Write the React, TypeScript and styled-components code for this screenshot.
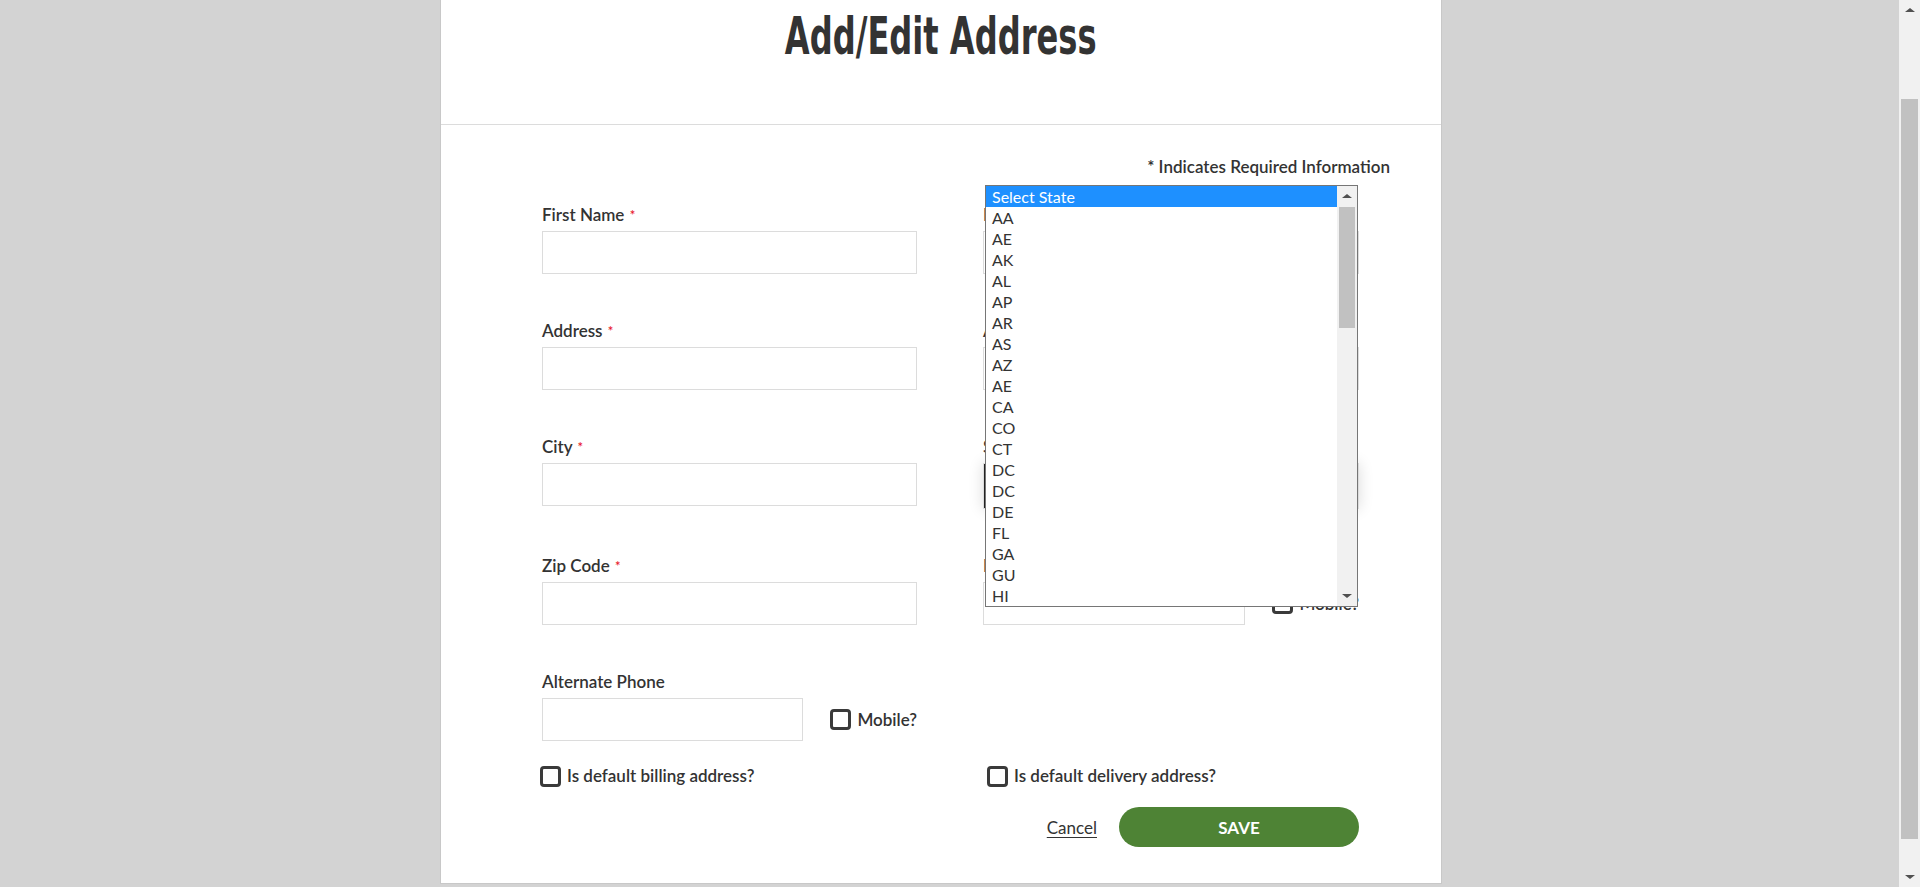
import React from "react";
import styled, { createGlobalStyle } from "styled-components";

const STATES = [
  "AA", "AE", "AK", "AL", "AP", "AR", "AS", "AZ", "AE", "CA", "CO", "CT", "DC", "DC",
  "DE", "FL", "GA", "GU", "HI", "IA", "ID", "IL", "IN", "KS", "KY", "LA", "MA", "MD",
  "ME", "MH", "MI", "MN", "MO", "MP", "MS", "MT", "NC", "ND", "NE", "NH", "NJ", "NM",
  "NV", "NY", "OH", "OK", "OR", "PA", "PR", "PW", "RI", "SC", "SD", "TN", "TX", "UT",
  "VA", "VI", "VT", "WA", "WI", "WV",
];

const GlobalStyle = createGlobalStyle`
  html, body {
    margin: 0;
    padding: 0;
    overflow: hidden;
    font-family: Lato, "Open Sans", sans-serif;
    color: #333;
  }
  * {
    box-sizing: border-box;
  }
`;

// classic scrollbar: arrow, track with thumb, arrow
const ScrollBar = ({
  width,
  thumbTop,
  thumbHeight,
}: {
  width: number;
  thumbTop: number;
  thumbHeight: number;
}) => (
  <Bar $w={width}>
    <ArrowBtn>
      <Tri $dir="up" />
    </ArrowBtn>
    <Track>
      <Thumb style={{ marginTop: thumbTop, height: thumbHeight }} />
    </Track>
    <ArrowBtn>
      <Tri $dir="down" />
    </ArrowBtn>
  </Bar>
);

const App = () => {
  return (
    <>
      <GlobalStyle />
      <Screen>
        <Main>
          <Modal>
            <Header>
              <Title>Add/Edit Address</Title>
            </Header>
            <Body>
              <RequiredNote>* Indicates Required Information</RequiredNote>
              <FormGrid>
                <Field>
                  <Label>
                    First Name <Req>*</Req>
                  </Label>
                  <TextInput />
                </Field>
                <Field>
                  <Label>
                    Last Name <Req>*</Req>
                  </Label>
                  <TextInput />
                </Field>

                <Field>
                  <Label>
                    Address <Req>*</Req>
                  </Label>
                  <TextInput />
                </Field>
                <Field>
                  <Label>Apartment/Suite</Label>
                  <TextInput />
                </Field>

                <Field>
                  <Label>
                    City <Req>*</Req>
                  </Label>
                  <TextInput />
                </Field>
                <Field>
                  <Label>
                    State <Req>*</Req>
                  </Label>
                  <StateSelect>
                    <option>Select State</option>
                  </StateSelect>
                </Field>

                <Field>
                  <Label>
                    Zip Code <Req>*</Req>
                  </Label>
                  <TextInput />
                </Field>
                <Field>
                  <Label>
                    Phone <Req>*</Req>
                  </Label>
                  <PhoneRow>
                    <PhoneInput />
                    <Check>
                      <Box />
                      Mobile?
                    </Check>
                  </PhoneRow>
                </Field>

                <Field>
                  <Label>Alternate Phone</Label>
                  <PhoneRow>
                    <PhoneInput />
                    <Check>
                      <Box />
                      Mobile?
                    </Check>
                  </PhoneRow>
                </Field>
              </FormGrid>

              <CheckRow>
                <Check $shift={-2}>
                  <Box />
                  Is default billing address?
                </Check>
                <Check $shift={4}>
                  <Box />
                  Is default delivery address?
                </Check>
              </CheckRow>

              <Actions>
                <CancelLink href="#">Cancel</CancelLink>
                <SaveButton>SAVE</SaveButton>
              </Actions>

              <ListBox>
                <OptionList>
                  <Option $selected>Select State</Option>
                  {STATES.map((s, i) => (
                    <Option key={i}>{s}</Option>
                  ))}
                </OptionList>
                <ScrollBar width={20} thumbTop={0} thumbHeight={121} />
              </ListBox>
            </Body>
          </Modal>
        </Main>
        <ScrollBar width={21} thumbTop={78} thumbHeight={740} />
      </Screen>
    </>
  );
};

export default App;

const Screen = styled.div`
  display: flex;
  height: 100vh;
  overflow: hidden;
`;

const Main = styled.div`
  flex: 1;
  display: flex;
  justify-content: center;
  align-items: flex-start;
  padding-right: 17px;
  background: #d3d3d3;
  overflow: hidden;
`;

const Bar = styled.div<{ $w: number }>`
  width: ${(p) => p.$w}px;
  flex-shrink: 0;
  display: flex;
  flex-direction: column;
  background: #f1f1f1;
`;

const ArrowBtn = styled.div`
  height: 21px;
  display: flex;
  align-items: center;
  justify-content: center;
  flex-shrink: 0;
`;

const Tri = styled.span<{ $dir: "up" | "down" }>`
  width: 0;
  height: 0;
  border-left: 5px solid transparent;
  border-right: 5px solid transparent;
  ${(p) =>
    p.$dir === "up"
      ? "border-bottom: 4px solid #505050; margin-top: -1px;"
      : "border-top: 4px solid #505050; margin-top: 1px;"}
`;

const Track = styled.div`
  flex: 1;
  padding: 0 2px;
  overflow: hidden;
`;

const Thumb = styled.div`
  background: #c1c1c1;
`;

const Modal = styled.div`
  width: 1002px;
  margin-top: -54px;
  background: #fff;
  border: 1px solid #c8c8c8;
`;

const Header = styled.div`
  height: 178px;
  padding-top: 64px;
  border-bottom: 1px solid #dcdcdc;
  text-align: center;
`;

const Title = styled.h1`
  margin: 0;
  font-family: "DejaVu Sans Condensed", "Liberation Sans", sans-serif;
  font-weight: 700;
  font-size: 51px;
  line-height: 1;
  color: #333;
  display: inline-block;
  transform: scaleX(0.7);
`;

const Body = styled.div`
  position: relative;
  padding: 30px 82px 36px 101px;
`;

const RequiredNote = styled.div`
  text-align: right;
  margin-right: -31px;
  font-size: 17px;
  line-height: 24px;
  font-weight: 600;
`;

const FormGrid = styled.div`
  display: grid;
  grid-template-columns: 375px 376px;
  column-gap: 66px;
  row-gap: 45px;
  margin-top: 24px;
  align-items: start;
`;

const Field = styled.div`
  display: flex;
  flex-direction: column;
`;

const Label = styled.label`
  font-size: 17px;
  line-height: 24px;
  font-weight: 600;
  margin-bottom: 4px;
`;

const Req = styled.span`
  color: #e8192c;
  font-size: 13px;
  vertical-align: top;
  margin-left: 1px;
`;

const TextInput = styled.input`
  height: 43px;
  width: 100%;
  border: 1px solid #dcdcdc;
  padding: 0 10px;
  font-family: Lato, sans-serif;
  font-size: 16px;
  outline: none;
`;

const StateSelect = styled.select`
  height: 46px;
  width: 100%;
  border: 1px solid #dcdcdc;
  box-shadow: 0 0 14px rgba(0, 0, 0, 0.14), inset 3px 0 0 #222;
  background: #fff;
  font-family: Lato, sans-serif;
  font-size: 16px;
  color: #333;
  padding: 0 10px;
  outline: none;
`;

const PhoneRow = styled.div`
  display: flex;
  align-items: center;
  gap: 27px;
`;

const PhoneInput = styled(TextInput)`
  width: 263px;
`;

const Check = styled.label<{ $shift?: number }>`
  display: flex;
  align-items: center;
  gap: 6px;
  font-size: 17px;
  line-height: 24px;
  font-weight: 600;
  margin-left: ${(p) => p.$shift || 0}px;
  cursor: pointer;
`;

const Box = styled.span`
  width: 21px;
  height: 21px;
  border: 3px solid #3a3a3a;
  border-radius: 4px;
  background: #fff;
  flex-shrink: 0;
`;

const CheckRow = styled.div`
  display: grid;
  grid-template-columns: 375px 376px;
  column-gap: 66px;
  margin-top: 23px;
`;

const Actions = styled.div`
  display: flex;
  justify-content: flex-end;
  align-items: center;
  gap: 22px;
  margin-top: 19px;
`;

const CancelLink = styled.a`
  font-size: 17px;
  color: #333;
  text-decoration: underline;
  text-underline-offset: 3px;
`;

const SaveButton = styled.button`
  width: 240px;
  height: 40px;
  border: none;
  border-radius: 20px;
  background: #4e8335;
  color: #fff;
  font-family: Lato, sans-serif;
  font-size: 17px;
  font-weight: 700;
  cursor: pointer;
`;

const ListBox = styled.div`
  position: absolute;
  top: 60px;
  left: 544px;
  width: 373px;
  height: 422px;
  border: 1px solid #767676;
  background: #fff;
  display: flex;
`;

const OptionList = styled.div`
  flex: 1;
  overflow: hidden;
`;

const Option = styled.div<{ $selected?: boolean }>`
  height: 21px;
  line-height: 21px;
  padding-left: 6px;
  font-size: 16px;
  color: ${(p) => (p.$selected ? "#fff" : "#333")};
  background: ${(p) => (p.$selected ? "#1e90ff" : "transparent")};
`;
